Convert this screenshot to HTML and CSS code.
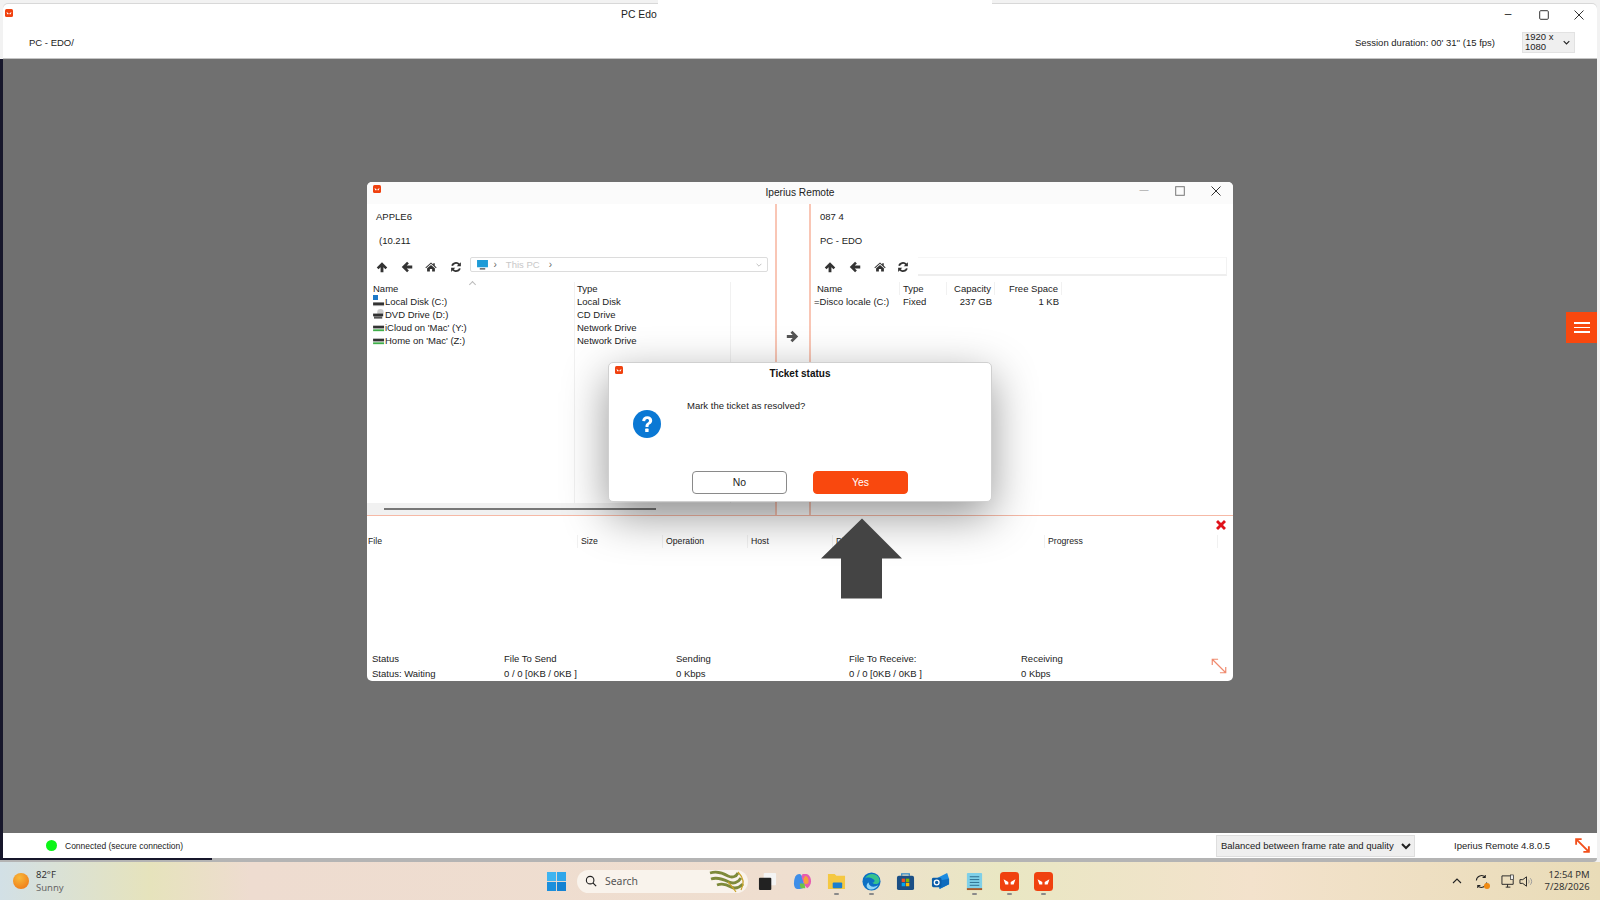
FILE: index.html

```html
<!DOCTYPE html>
<html lang="en">
<head>
  <meta charset="UTF-8">
  <title>Iperius Remote</title>
  <link rel="stylesheet" href="styles.css">
</head>
<body>
  <svg class="defs" width="0" height="0">
    <symbol id="i-up" viewBox="0 0 16 16"><path d="M8 1.5 15 8.6 12.6 11 9.9 8.2V15H6.1V8.2L3.4 11 1 8.6Z"/></symbol>
    <symbol id="i-left" viewBox="0 0 16 16"><path d="M1 8 8.1 1 10.5 3.4 7.7 6.1H15V9.9H7.7L10.5 12.6 8.1 15Z"/></symbol>
    <symbol id="i-right" viewBox="0 0 16 16"><path d="M15 8 7.9 1 5.5 3.4 8.3 6.1H1V9.9H8.3L5.5 12.6 7.9 15Z"/></symbol>
    <symbol id="i-home" viewBox="0 0 16 16"><path d="M8 2 11 4.6V3H13V6.3L15.5 8.5 14.6 9.5 8 3.8 1.4 9.5.5 8.5ZM8 5.2 13.2 9.7V14H9.5V10.5H6.5V14H2.8V9.7Z"/></symbol>
    <symbol id="i-sync" viewBox="0 0 16 16"><path d="M14.5 1.5V7H9L11 5A4.3 4.3 0 0 0 4 6.5L1.7 6A6.6 6.6 0 0 1 12.7 3.3ZM1.5 14.5V9H7L5 11A4.3 4.3 0 0 0 12 9.5L14.3 10A6.6 6.6 0 0 1 3.3 12.7Z"/></symbol>
    <symbol id="i-logo" viewBox="0 0 16 16">
      <rect width="16" height="16" rx="3" fill="#f0410f"/>
      <path d="M3 6 7 8.5V10.5H4.5ZM13 6 9 8.5V10.5H11.5Z" fill="#fff"/>
    </symbol>
    <symbol id="i-grow" viewBox="0 0 20 20"><path d="M2.5 2.5 17.5 17.5M2.5 9V2.5H9M11 17.5H17.5V11" fill="none"/></symbol>
    <symbol id="d-hdd" viewBox="0 0 14 12"><rect y="7" width="12" height="3" fill="#333"/><rect y="10" width="12" height="1" fill="#999"/></symbol>
    <symbol id="d-net" viewBox="0 0 14 12"><rect y="4" width="12" height="3" fill="#333"/><rect y="8" width="12" height="2" fill="#3fae49"/></symbol>
    <symbol id="d-dvd" viewBox="0 0 14 12"><circle cx="8" cy="3.5" r="3.5" fill="#ccc"/><rect y="5" width="11" height="3" fill="#333"/><rect x="1" y="8" width="9" height="2.5" fill="#555"/></symbol>
  </svg>

  <div class="topstrip"></div>

  <div class="session">
    <div class="session-title">
      <svg class="logo-small"><use href="#i-logo"/></svg>
      <div class="session-name">PC Edo</div>
      <div class="winbtns">
        <span class="wb">&#8211;</span>
        <svg class="wb-svg" viewBox="0 0 10 10"><rect x=".7" y=".7" width="8.6" height="8.6" rx="1" fill="none" stroke="#333"/></svg>
        <svg class="wb-svg" viewBox="0 0 10 10"><path d="M.5.5 9.5 9.5M9.5.5.5 9.5" stroke="#333"/></svg>
      </div>
    </div>
    <div class="session-info">
      <div class="host">PC - EDO/</div>
      <div class="duration">Session duration: 00' 31'' (15 fps)</div>
      <div class="res-select">
        <span>1920 x<br>1080</span>
        <svg viewBox="0 0 10 6"><path d="M1 1 5 5 9 1" fill="none" stroke="#222" stroke-width="1.6"/></svg>
      </div>
    </div>

    <div class="stage">
      <div class="menu-btn"><i></i><i></i><i></i></div>

      <div class="remote">
        <div class="remote-title">
          <svg class="logo-small"><use href="#i-logo"/></svg>
          <span>Iperius Remote</span>
          <div class="winbtns inner">
            <span class="wb">&#8212;</span>
            <svg class="wb-svg" viewBox="0 0 10 10"><rect x=".7" y=".7" width="8.6" height="8.6" fill="none" stroke="#777"/></svg>
            <svg class="wb-svg" viewBox="0 0 10 10"><path d="M.5.5 9.5 9.5M9.5.5.5 9.5" stroke="#333"/></svg>
          </div>
        </div>

        <div class="panes">
          <div class="pane">
            <div class="label">APPLE6</div>
            <div class="label shifted">(10.211</div>
            <div class="toolbar">
              <svg><use href="#i-up"/></svg>
              <svg><use href="#i-left"/></svg>
              <svg><use href="#i-home"/></svg>
              <svg><use href="#i-sync"/></svg>
              <div class="pathbox">
                <svg class="pc" viewBox="0 0 12 11"><rect width="12" height="8" fill="#1e9bd7"/><rect x="3" y="9" width="6" height="1.5" fill="#555"/></svg>
                <span class="sep">&#8250;</span>
                <span class="pc-name">This PC</span>
                <span class="sep">&#8250;</span>
                <svg class="drop" viewBox="0 0 10 6"><path d="M1 1 5 5 9 1" fill="none" stroke="#999"/></svg>
              </div>
            </div>
            <div class="local-list">
              <div class="lcol name-col">
                <div class="head">Name<span class="caret"></span></div>
                <div class="drive"><svg><use href="#d-hdd"/></svg><b class="winmark"></b>Local Disk (C:)</div>
                <div class="drive"><svg><use href="#d-dvd"/></svg>DVD Drive (D:)</div>
                <div class="drive"><svg><use href="#d-net"/></svg>iCloud on 'Mac' (Y:)</div>
                <div class="drive"><svg><use href="#d-net"/></svg>Home on 'Mac' (Z:)</div>
              </div>
              <div class="lcol type-col">
                <div class="head">Type</div>
                <div class="cell">Local Disk</div>
                <div class="cell">CD Drive</div>
                <div class="cell">Network Drive</div>
                <div class="cell">Network Drive</div>
              </div>
            </div>
            <div class="hscroll"><i></i></div>
          </div>

          <div class="gutter"><svg><use href="#i-right"/></svg></div>

          <div class="pane right">
            <div class="label">087 4</div>
            <div class="label">PC - EDO</div>
            <div class="toolbar">
              <svg><use href="#i-up"/></svg>
              <svg><use href="#i-left"/></svg>
              <svg><use href="#i-home"/></svg>
              <svg><use href="#i-sync"/></svg>
              <div class="pathinput"></div>
            </div>
            <div class="remote-list">
              <div class="hd">Name</div>
              <div class="hd">Type</div>
              <div class="hd num">Capacity</div>
              <div class="hd num">Free Space</div>
              <div class="td first">Disco locale (C:)</div>
              <div class="td">Fixed</div>
              <div class="td num">237 GB</div>
              <div class="td num">1 KB</div>
            </div>
          </div>
        </div>

        <div class="transfers">
          <div class="x-row"><svg viewBox="0 0 12 12"><path d="M1 3 3 1 6 4 9 1 11 3 8 6 11 9 9 11 6 8 3 11 1 9 4 6Z" fill="#e0121a"/></svg></div>
          <div class="queue-head">
            <div>File</div>
            <div>Size</div>
            <div>Operation</div>
            <div>Host</div>
            <div>Direction</div>
            <div>Progress</div>
          </div>
          <div class="status-grid">
            <div>Status</div>
            <div>File To Send</div>
            <div>Sending</div>
            <div>File To Receive:</div>
            <div>Receiving</div>
            <svg class="grow"><use href="#i-grow"/></svg>
            <div>Status: Waiting</div>
            <div>0 / 0 [0KB / 0KB ]</div>
            <div>0 Kbps</div>
            <div>0 / 0 [0KB / 0KB ]</div>
            <div>0 Kbps</div>
          </div>
        </div>
      </div>

      <div class="dialog">
        <div class="dialog-title">
          <svg class="logo-small"><use href="#i-logo"/></svg>
          <span>Ticket status</span>
        </div>
        <div class="dialog-body">
          <svg class="ask" viewBox="0 0 28 28">
            <circle cx="14" cy="14" r="14" fill="#0a78d4"/>
            <path d="M9.2 11C9.4 8 11.4 6.3 14.3 6.3 17.2 6.3 19.2 8 19.2 10.4 19.2 12.3 18.2 13.3 16.8 14.3 15.7 15.1 15.5 15.6 15.5 17H12.5C12.4 15 13 13.9 14.5 12.8 15.6 12 16 11.5 16 10.7 16 9.7 15.3 9.1 14.2 9.1 13 9.1 12.3 9.9 12.2 11.2Z" fill="#fff"/>
            <rect x="12.2" y="18.6" width="3.4" height="3.4" rx=".6" fill="#fff"/>
          </svg>
          <p>Mark the ticket as resolved?</p>
        </div>
        <div class="dialog-btns">
          <button class="btn-no">No</button>
          <button class="btn-yes">Yes</button>
        </div>
      </div>

      <svg class="big-arrow" viewBox="0 0 81 80"><path d="M41 0 81 40H61V80H20V40H0Z" fill="#444"/></svg>
    </div>

    <div class="statusbar">
      <span class="dot"></span>
      <span class="conn">Connected (secure connection)</span>
      <select class="quality"><option>Balanced between frame rate and quality</option></select>
      <span class="version">Iperius Remote 4.8.0.5</span>
      <svg class="grow2"><use href="#i-grow"/></svg>
    </div>
    <div class="footline"><i></i></div>
  </div>

  <div class="taskbar">
    <div class="weather">
      <span class="sun"></span>
      <div class="weather-txt"><div>82°F</div><div class="sunny">Sunny</div></div>
    </div>

    <div class="tasks">
      <svg class="tk start" viewBox="0 0 20 20">
        <rect width="9.5" height="9.5" fill="#3fb4f0"/><rect x="10.5" width="9.5" height="9.5" fill="#2fa6ea"/>
        <rect y="10.5" width="9.5" height="9.5" fill="#1b8fdc"/><rect x="10.5" y="10.5" width="9.5" height="9.5" fill="#1482d2"/>
      </svg>
      <div class="searchbox">
        <svg viewBox="0 0 14 14"><circle cx="6" cy="6" r="4.4" fill="none" stroke="#222" stroke-width="1.3"/><path d="M9.2 9.2 13 13" stroke="#222" stroke-width="1.5"/></svg>
        <span>Search</span>
        <svg class="doodle" viewBox="0 0 40 24">
          <path d="M2 4C9 2 15 4 20 7 24 9 28 8 30 4M3 10C9 8 15 10 21 13 25 15 30 14 33 9M9 16C14 14 18 15 23 18 27 20 31 19 35 15" fill="none" stroke="#7d8a3a" stroke-width="2.8"/>
          <path d="M30 3C35 8 37 14 33 21M20 13C24 17 26 20 28 23" fill="none" stroke="#c9a227" stroke-width="1.2"/>
        </svg>
      </div>
      <svg class="tk" viewBox="0 0 20 20"><rect x="6" y="1" width="13" height="13" rx="1" fill="#f4f4f4"/><rect x="1" y="6" width="13" height="13" rx="1" fill="#222"/></svg>
      <svg class="tk" viewBox="0 0 20 20">
        <path d="M4 3C7 1 9 2 10 6L12 14C12 17 9 18 6 18 2 18 1 15 1 12 1 8 2 5 4 3Z" fill="#3f8ee8"/>
        <path d="M10 2H14C17 2 19 6 19 10 19 13 17 16 15 17L12 14 9 5Z" fill="#e65cb0"/>
        <path d="M13 4C16 5 17 9 16 12L12 13 11 7Z" fill="#f6a13a"/>
        <path d="M7 12H12L13 17H8Z" fill="#6cc24a"/>
      </svg>
      <div class="tk-wrap"><svg class="tk" viewBox="0 0 20 20"><path d="M1 2H8L10 4H19V18H1Z" fill="#f5c842"/><rect x="6" y="11" width="10" height="6" rx="1" fill="#1b7fd0"/></svg><i></i></div>
      <div class="tk-wrap"><svg class="tk" viewBox="0 0 20 20">
        <circle cx="10" cy="10" r="9.5" fill="#0c70c4"/>
        <path d="M3 7C5 2 13 0 17 5 19 8 19 11 17 12 15 13 12 13 11 11 14 11 14 8 11 7 7 5 4 6 3 7Z" fill="#35c28e"/>
        <path d="M7 11C7 15 12 17 17 14 15 18 9 20 6 17 4 15 5 12 7 11Z" fill="#8fd6f7"/>
      </svg><i></i></div>
      <svg class="tk" viewBox="0 0 20 20">
        <path d="M6 4V2H14V4" fill="none" stroke="#2d88c7" stroke-width="1.3"/>
        <rect x="1" y="4" width="18" height="15" rx="2" fill="#1b4f85"/>
        <rect x="6" y="7" width="3.6" height="3.6" fill="#f25022"/><rect x="10.4" y="7" width="3.6" height="3.6" fill="#7fba00"/>
        <rect x="6" y="11.4" width="3.6" height="3.6" fill="#00a4ef"/><rect x="10.4" y="11.4" width="3.6" height="3.6" fill="#ffb900"/>
      </svg>
      <svg class="tk" viewBox="0 0 20 20">
        <path d="M7 6 17 1 19 7V13L9 18Z" fill="#1b8be0"/><path d="M9 9 19 7V13L9 18Z" fill="#0f6cbd"/>
        <rect x="1" y="6" width="10" height="10" rx="1.5" fill="#0c5ea8"/><circle cx="6" cy="11" r="2.5" fill="none" stroke="#fff" stroke-width="1.4"/>
      </svg>
      <div class="tk-wrap"><svg class="tk" viewBox="0 0 20 20">
        <rect x="2" y="1" width="16" height="18" rx="1" fill="#7fd0e8"/>
        <rect x="2" y="17" width="16" height="2" fill="#a85a2a"/>
        <path d="M5 5H15M5 8H15M5 11H15M5 14H15" stroke="#2a6c8c" stroke-width="1"/>
      </svg><i></i></div>
      <div class="tk-wrap"><svg class="tk"><use href="#i-logo"/></svg><i></i></div>
      <div class="tk-wrap"><svg class="tk"><use href="#i-logo"/></svg><i></i></div>
    </div>

    <div class="tray">
      <svg class="t-ic chev" viewBox="0 0 12 12"><path d="M2 8 6 4 10 8" fill="none" stroke="#222" stroke-width="1.1"/></svg>
      <div class="sync-wrap">
        <svg class="t-ic big" viewBox="0 0 16 16"><path d="M2.5 7A5.5 5.5 0 0 1 12 3.5M13.5 9A5.5 5.5 0 0 1 4 12.5M12 1V3.8H9.2M4 15V12.2H6.8" fill="none" stroke="#222" stroke-width="1.1"/></svg>
        <b></b>
      </div>
      <svg class="t-ic big mon" viewBox="0 0 16 16"><path d="M1 2H13V11H1ZM5 14H10M7 11V14" fill="none" stroke="#222"/><rect x="10" y="1" width="3.5" height="5" fill="#eee" stroke="#222" stroke-width=".7"/></svg>
      <svg class="t-ic big spk" viewBox="0 0 16 16"><path d="M1 6H4L8 3V13L4 10H1Z" fill="none" stroke="#222"/><path d="M10 6C11 7 11 9 10 10M12 4.5C14 6.5 14 9.5 12 11.5" fill="none" stroke="#999"/></svg>
      <div class="clock"><div>12:54 PM</div><div>7/28/2026</div></div>
    </div>
  </div>
</body>
</html>
```

FILE: styles.css

```css
* {
  box-sizing: border-box;
}
html, body {
  margin: 0;
  height: 900px;
  overflow: hidden;
}
body {
  position: relative;
  display: flex;
  flex-direction: column;
  background: #f2f2f2;
  font-family: "Liberation Sans", Arial, sans-serif;
  font-size: 9.5px;
  color: #222;
  padding-top: 4px;
}
.defs {
  position: absolute;
}
.topstrip {
  position: absolute;
  left: 658px;
  top: 0;
  width: 334px;
  height: 5px;
  background: #fff;
  z-index: 5;
}

/* outer session window */
.session {
  height: 858px;
  width: 1597px;
  display: flex;
  flex-direction: column;
}
.session-title {
  height: 22px;
  margin-left: 3px;
  background: #fff;
  border-radius: 5px 5px 0 0;
  position: relative;
  display: flex;
  align-items: center;
  padding-left: 618px;
  box-shadow: 0 -1px 0 #d8d8d8;
}
.logo-small {
  position: absolute;
  left: 2px;
  top: 5px;
  width: 8px;
  height: 8px;
}
.session-name {
  white-space: nowrap;
  font-size: 10.4px;
  margin-top: -1px;
}
.winbtns {
  position: absolute;
  right: 0;
  top: 0;
  display: flex;
}
.winbtns > * {
  width: 36px;
}
.wb {
  height: 22px;
  line-height: 21px;
  text-align: center;
  font-size: 12px;
  color: #333;
}
.wb-svg {
  height: 10px;
  padding: 0;
  margin-top: 6px;
}
.session-title .wb {
  margin-right: -1px;
}
.session-title .wb-svg:nth-child(2) {
  margin-right: -1px;
  margin-left: 1px;
}
.session-info {
  height: 33px;
  margin-left: 3px;
  background: #fff;
  display: flex;
  align-items: center;
  padding-left: 26px;
  border-bottom: 1px solid #c4c4c4;
}
.host {
  white-space: nowrap;
}
.duration {
  margin-left: auto;
  margin-right: 27px;
}
.res-select {
  width: 53px;
  height: 21px;
  margin-right: 22px;
  background: #efefef;
  border: 1px solid #e2e2e2;
  display: flex;
  align-items: center;
  justify-content: space-between;
  padding: 0 4px 0 2px;
  line-height: 10px;
}
.res-select svg {
  width: 7px;
  height: 5px;
}

.stage {
  flex: 1;
  position: relative;
  background: #707070;
  border-left: 3px solid #17172b;
}
.menu-btn {
  position: absolute;
  right: 0;
  top: 253px;
  width: 31px;
  height: 31px;
  background: #f9480e;
  display: flex;
  flex-direction: column;
  align-items: center;
  justify-content: center;
  gap: 3px;
}
.menu-btn i {
  width: 16px;
  height: 1.5px;
  background: #fff;
}

/* Iperius Remote window */
.remote {
  position: absolute;
  left: 364px;
  top: 123px;
  width: 866px;
  height: 499px;
  background: #fff;
  border-radius: 5px;
  display: flex;
  flex-direction: column;
  overflow: hidden;
}
.remote-title {
  height: 22px;
  position: relative;
  background: #fbfbfb;
  text-align: center;
  line-height: 22px;
  font-size: 10.2px;
}
.remote-title .logo-small {
  left: 6px;
  top: 3px;
}
.winbtns.inner {
  right: -1px;
}
.winbtns.inner .wb {
  color: #888;
  font-size: 9px;
  line-height: 17px;
  margin-right: -1px;
}
.winbtns.inner .wb-svg {
  margin-top: 4px;
}
.winbtns.inner .wb-svg:nth-child(2) {
  margin-left: 1px;
}
.panes {
  height: 312px;
  display: grid;
  grid-template-columns: 408px 36px 1fr;
  border-bottom: 1px solid #f6b9a6;
}
.pane {
  display: flex;
  flex-direction: column;
  padding-top: 1px;
  min-width: 0;
}
.label {
  height: 24px;
  line-height: 24px;
  padding-left: 9px;
  white-space: nowrap;
}
.label.shifted {
  padding-left: 12px;
}
.toolbar {
  height: 28px;
  display: flex;
  align-items: center;
  padding-left: 9px;
}
.toolbar > svg {
  width: 12px;
  height: 12px;
  margin-right: 12.5px;
  fill: #333;
}
.toolbar > svg:nth-child(4) {
  margin-right: 8px;
}
.pathbox {
  width: 298px;
  height: 15px;
  margin-top: -5px;
  border: 1px solid #dcdcdc;
  border-radius: 2px;
  background: #fff;
  display: flex;
  align-items: center;
  padding-left: 6px;
  color: #c8c8c8;
}
.pathbox .pc {
  width: 11px;
  height: 10px;
}
.sep {
  margin: 0 9px 0 6px;
  color: #666;
  font-size: 10px;
}
.pc-name + .sep {
  margin: 0 0 0 9px;
}
.pathbox .drop {
  width: 6px;
  height: 4px;
  margin-left: auto;
  margin-right: 5px;
}
.pathinput {
  width: 309px;
  height: 19px;
  margin-top: -1px;
  border-bottom: 2px solid #eee;
  border-top: 1px solid #f6f6f6;
  border-right: 1px solid #f2f2f2;
}
.right .toolbar {
  padding-left: 13px;
}
.right .toolbar > svg {
  margin-right: 13px;
}
.right .toolbar > svg:nth-child(3) {
  margin-right: 11px;
}
.right .toolbar > svg:nth-child(4) {
  margin-right: 9px;
}
.local-list {
  flex: 1;
  margin-top: .5px;
  display: flex;
}
.lcol .head,
.lcol .cell,
.lcol .drive {
  height: 13px;
  line-height: 13px;
  white-space: nowrap;
}
.name-col {
  width: 207px;
  padding-left: 6px;
}
.head {
  position: relative;
}
.caret {
  position: absolute;
  left: 97px;
  top: 0;
  width: 5px;
  height: 5px;
  border-left: 1px solid #bbb;
  border-top: 1px solid #bbb;
  transform: rotate(45deg);
}
.type-col {
  width: 157px;
  padding-left: 2px;
  border-left: 1px solid #f1f1f1;
  border-right: 1px solid #f1f1f1;
}
.drive {
  position: relative;
  padding-left: 12px;
}
.drive svg {
  position: absolute;
  left: 0;
  top: 1px;
  width: 13px;
  height: 11px;
}
.winmark {
  position: absolute;
  left: 0;
  top: 0;
  width: 5px;
  height: 5px;
  background: #1b78c8;
}
.hscroll {
  height: 12px;
  background: #f1f1f1;
  padding: 5px 0 0 17px;
}
.hscroll i {
  display: block;
  width: 272px;
  height: 2px;
  background: #777;
}
.gutter {
  border-left: 2px solid #f9c6b5;
  border-right: 2px solid #f9c6b5;
  display: flex;
  justify-content: center;
  align-items: flex-start;
  padding: 126px 2px 0 0;
}
.gutter svg {
  width: 13px;
  height: 13px;
  fill: #555;
}
.remote-list {
  display: grid;
  grid-template-columns: 89px 47px 48px 67px;
  grid-auto-rows: 13px;
  line-height: 13px;
  margin-top: .5px;
  white-space: nowrap;
}
.hd,
.td {
  padding-left: 6px;
}
.hd:nth-child(n+2),
.td:nth-child(n+2) {
  padding-left: 3px;
}
.hd {
  border-right: 1px solid #f1f1f1;
}
.num {
  text-align: right;
  padding-right: 3px;
}
.first::before {
  content: "=";
}

/* transfers */
.transfers {
  flex: 1;
  display: flex;
  flex-direction: column;
}
.x-row {
  height: 17px;
  display: flex;
  justify-content: flex-end;
  padding: 3px 6px 0 0;
}
.x-row svg {
  width: 12px;
  height: 12px;
}
.queue-head {
  height: 13px;
  margin-top: 2px;
  line-height: 13px;
  font-size: 8.7px;
  display: grid;
  grid-template-columns: 210px 85px 85px 85px 212px 173px;
  width: 851px;
  border-right: 1px solid #f1f1f1;
}
.queue-head div {
  padding-left: 3px;
  border-left: 1px solid #f1f1f1;
}
.queue-head div:first-child {
  padding-left: 1px;
  border-left: 0;
}
.status-grid {
  margin-top: auto;
  display: grid;
  grid-template-columns: 132px 172px 173px 172px 168px 1fr;
  grid-auto-rows: 14.5px;
  line-height: 14.5px;
  padding-left: 5px;
  white-space: nowrap;
}
.grow {
  grid-column: 6;
  grid-row: 1 / span 2;
  width: 20px;
  height: 18px;
  justify-self: end;
  align-self: center;
  margin: -2px 4px 0 0;
  stroke: #f08a6e;
  stroke-width: 1.3;
}

/* dialog */
.dialog {
  position: absolute;
  left: 605px;
  top: 303px;
  width: 384px;
  height: 140px;
  background: #fff;
  border-radius: 5px;
  border: 1px solid #d0d0d0;
  box-shadow: 0 14px 45px rgba(0, 0, 0, .42);
  display: flex;
  flex-direction: column;
}
.dialog-title {
  height: 23px;
  line-height: 21px;
  text-align: center;
  font-size: 10px;
  font-weight: bold;
  color: #111;
  position: relative;
}
.dialog-title .logo-small {
  left: 6px;
  top: 3px;
}
.dialog-body {
  flex: 1;
  position: relative;
}
.dialog-body p {
  margin: 0;
  position: absolute;
  left: 78px;
  top: 14px;
  line-height: 12px;
}
.ask {
  position: absolute;
  left: 24px;
  top: 24px;
  width: 28px;
  height: 28px;
}
.dialog-btns {
  display: flex;
  padding: 0 0 7px 83px;
  gap: 26px;
}
.dialog-btns button {
  width: 95px;
  height: 23px;
  border-radius: 4px;
  font-family: inherit;
  font-size: 10.4px;
  padding: 0;
}
.btn-no {
  background: #fff;
  border: 1px solid #8a8a8a;
  color: #222;
}
.btn-yes {
  background: #f9480e;
  border: 1px solid #f9480e;
  color: #fff;
}
.big-arrow {
  position: absolute;
  left: 818px;
  top: 459px;
  width: 81px;
  height: 81px;
}

/* bottom bar of the session window */
.statusbar {
  height: 25px;
  border-left: 3px solid #17172b;
  background: #fff;
  display: flex;
  align-items: center;
  padding-left: 43px;
  flex: none;
}
.dot {
  width: 11px;
  height: 11px;
  border-radius: 50%;
  background: #0bf516;
}
.conn {
  margin-left: 8px;
  font-size: 8.5px;
}
.quality {
  width: 199px;
  height: 22px;
  margin-left: auto;
  background: #efefef;
  border: 1px solid #dedede;
  font-family: inherit;
  font-size: 9.5px;
  color: #222;
  padding-left: 0;
}
.version {
  margin-left: 39px;
  width: 95px;
  white-space: nowrap;
}
.grow2 {
  width: 17px;
  height: 17px;
  margin-left: 25px;
  margin-right: 6px;
  stroke: #f2501c;
  stroke-width: 2.2;
}
.footline {
  height: 4px;
  background: #b4b4b4;
  border-radius: 0 0 6px 0;
}
.footline i {
  display: block;
  width: 212px;
  height: 2px;
  background: #17172b;
}

/* windows taskbar */
.taskbar {
  height: 38px;
  position: relative;
  background: linear-gradient(90deg, #d2e0e6 0, #e6e3bc 150px, #eedcd0 250px, #efdecf 800px, #e9e7c3 1000px, #f3e2cc 1250px, #e9dcb8 1600px);
  display: flex;
  align-items: center;
  font-family: "Noto Sans", "Open Sans", sans-serif;
  color: #333;
}
.weather {
  position: absolute;
  left: 13px;
  top: 0;
  height: 38px;
  display: flex;
  align-items: center;
}
.sun {
  width: 16px;
  height: 16px;
  border-radius: 50%;
  background: radial-gradient(circle at 40% 30%, #f8b93a, #ee6f12);
}
.weather-txt {
  margin-left: 7px;
  line-height: 13px;
}
.sunny {
  color: #666;
}
.tasks {
  position: absolute;
  left: 547px;
  top: 0;
  height: 38px;
  display: flex;
  align-items: center;
}
.tk {
  width: 19px;
  height: 19px;
  flex: none;
}
.searchbox {
  width: 171px;
  height: 23px;
  margin-right: 10px;
  border-radius: 12px;
  background: #f9f3ec;
  display: flex;
  align-items: center;
  padding-left: 8px;
  font-size: 10.4px;
  color: #555;
}
.searchbox svg {
  width: 12px;
  height: 12px;
}
.searchbox span {
  margin-left: 8px;
}
.searchbox .doodle {
  width: 40px;
  height: 24px;
  margin-left: auto;
}
.tasks > svg.tk,
.tk-wrap {
  margin-right: 15.5px;
}
.tasks > svg.start {
  margin-right: 11px;
}
.tk-wrap {
  position: relative;
  width: 19px;
  height: 19px;
}
.tk-wrap i {
  position: absolute;
  left: 7px;
  top: 21px;
  width: 5px;
  height: 2px;
  border-radius: 1px;
  background: #8a8a8a;
}
.tray {
  position: absolute;
  left: 1451px;
  top: 0;
  height: 38px;
  display: flex;
  align-items: center;
}
.t-ic.chev {
  width: 12px;
  height: 12px;
  margin-right: 10.5px;
}
.t-ic.big {
  width: 15px;
  height: 15px;
}
.sync-wrap {
  position: relative;
  width: 15px;
  height: 15px;
  margin-right: 12px;
}
.sync-wrap .t-ic {
  display: block;
}
.sync-wrap b {
  position: absolute;
  right: -1px;
  bottom: 0;
  width: 6px;
  height: 6px;
  border-radius: 50%;
  background: #f08a12;
}
.t-ic.mon {
  margin-right: 3px;
}
.t-ic.spk {
  margin-right: 11px;
}
.clock {
  text-align: right;
  line-height: 12.5px;
}
```
